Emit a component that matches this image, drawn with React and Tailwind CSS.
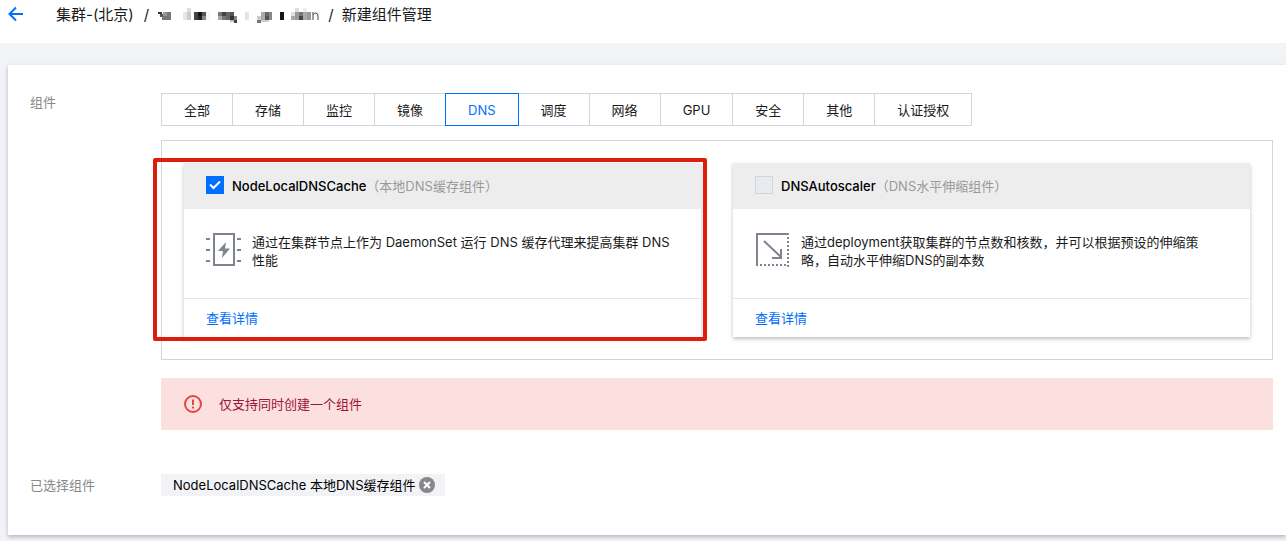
import { useState } from 'react'

const TABS = ['全部', '存储', '监控', '镜像', 'DNS', '调度', '网络', 'GPU', '安全', '其他', '认证授权']

const COMPONENTS = [
  {
    id: 'NodeLocalDNSCache',
    alias: '本地DNS缓存组件',
    desc: '通过在集群节点上作为 DaemonSet 运行 DNS 缓存代理来提高集群 DNS\n性能',
    Icon: CacheIcon,
    highlight: true,
  },
  {
    id: 'DNSAutoscaler',
    alias: 'DNS水平伸缩组件',
    desc: '通过deployment获取集群的节点数和核数，并可以根据预设的伸缩策\n略，自动水平伸缩DNS的副本数',
    Icon: ScaleIcon,
  },
]

// [x, y, width, height, grey] blocks that hide the cluster name
const MOSAIC = [
  [0, 5, 4, 2, '#333'], [2, 7, 3, 3, '#555'], [4, 9, 5, 4, '#777'], [5, 5, 4, 4, '#999'], [9, 5, 4, 8, '#777'],
  [25, 5, 4, 8, '#e6e6e6'], [29, 1, 4, 12, '#dedede'], [29, 5, 4, 8, '#ccc'], [36, 5, 4, 8, '#444'], [40, 5, 4, 4, '#111'], [40, 9, 4, 4, '#222'], [44, 5, 4, 4, '#555'], [44, 9, 4, 4, '#888'], [48, 5, 4, 8, '#f4f4f4'],
  [60, 5, 4, 4, '#777'], [60, 9, 4, 4, '#aaa'], [64, 5, 4, 4, '#444'], [64, 9, 4, 4, '#777'], [68, 5, 4, 8, '#666'], [72, 5, 4, 4, '#555'], [72, 9, 4, 4, '#333'], [72, 13, 4, 2, '#bbb'], [76, 9, 3, 4, '#888'], [76, 13, 3, 3, '#444'],
  [87, 5, 4, 8, '#e4e4e4'],
  [99, 9, 4, 4, '#ccc'], [99, 13, 4, 3, '#777'], [103, 5, 4, 8, '#aaa'], [107, 5, 4, 4, '#666'], [107, 9, 4, 4, '#555'], [111, 5, 3, 8, '#888'], [103, 13, 8, 2, '#ccc'],
  [122, 5, 4, 8, '#151515'],
  [133, 5, 4, 4, '#e0e0e0'], [133, 9, 4, 4, '#aaa'], [137, 1, 4, 4, '#ddd'], [137, 5, 4, 8, '#999'], [141, 5, 4, 4, '#777'], [141, 9, 4, 4, '#444'], [145, 1, 4, 4, '#eee'], [145, 5, 4, 8, '#aaa'], [149, 5, 4, 8, '#999'],
]

function Mosaic() {
  return (
    <svg className="h-4 w-[162px]" viewBox="0 0 162 16" shapeRendering="crispEdges" aria-hidden="true">
      {MOSAIC.map(([x, y, w, h, fill]) => <rect key={`${x}-${y}-${h}`} x={x} y={y} width={w} height={h} fill={fill} />)}
      <path d="M155 13V5M155 8q1-2 3-2 2 0 2 3v4" fill="none" stroke="#444" shapeRendering="auto" />
    </svg>
  )
}

function CacheIcon() {
  return (
    <svg className="w-9 h-[34px] shrink-0" viewBox="0 0 36 34" fill="none" stroke="#7e8591" strokeWidth="2" aria-hidden="true">
      <path d="M8 1h20v31H8z" />
      <path d="M0 6h4M0 17h4M0 28h4M31 6h4M31 17h4M31 28h4" />
      <path d="M20 9l-8 9h5l-1 7 8-9.500h-5z" fill="#7e8591" stroke="none" />
    </svg>
  )
}

function ScaleIcon() {
  return (
    <svg className="w-9 h-[34px] shrink-0" viewBox="0 0 36 34" fill="none" stroke="#7e8591" strokeWidth="2" aria-hidden="true">
      <path d="M2 33V1h32" />
      <path d="M33 4v30M5 32h27" strokeDasharray="2 2" />
      <path d="M9 8l17 16M26 16v9h-9" />
    </svg>
  )
}

function ComponentCard({ item, checked, onChange }) {
  const { id, alias, desc, Icon, highlight } = item
  return (
    <section className="relative bg-white shadow-[0_2px_4px_rgba(54,58,80,0.32)]">
      <label className="flex h-[46px] items-center bg-[#ededed] px-[22px] pb-[2px]">
        <span className="relative flex">
          <input
            type="checkbox" checked={checked} onChange={onChange}
            className="size-[18px] appearance-none border border-[#cfd5de] bg-[#e7eaef] checked:border-[#006eff] checked:bg-[#006eff]"
          />
          {checked && (
            <svg className="pointer-events-none absolute inset-0 size-[18px]" viewBox="0 0 18 18" fill="none" stroke="#fff" strokeWidth="2" aria-hidden="true">
              <path d="M4 8.500l3.500 3.500L14 5.500" />
            </svg>
          )}
        </span>
        <span className="ml-2 pt-[2px] font-medium text-black">{id}</span>
        <span className="pt-[2px] text-[#999]">（{alias}）</span>
      </label>
      <div className="flex h-[90px] gap-[10px] border-b border-[#e5e5e5] pt-6 pr-4 pl-[22px]">
        <Icon />
        <p className="leading-[18px] whitespace-pre-line">{desc}</p>
      </div>
      <div className="flex h-[38px] items-center px-[22px]">
        <a href="#detail" className="text-[#006eff]">查看详情</a>
      </div>
      {highlight && <div className="pointer-events-none absolute -top-[5px] -right-[6px] -bottom-1 -left-[31px] rounded-xs border-4 border-[#dc1e0c]" />}
    </section>
  )
}

export default function App() {
  const [tab, setTab] = useState('DNS')
  const [selected, setSelected] = useState('NodeLocalDNSCache')
  const current = COMPONENTS.find(c => c.id === selected)

  return (
    <div className="min-h-screen overflow-hidden bg-[#f2f3f7] pb-[6px] font-[Inter,'Noto_Sans_CJK_SC',sans-serif] text-[13px] leading-[18px] text-[#1a1a1a]">
      <header className="flex h-[43px] items-start bg-white px-2 pt-1 text-[15px] leading-[22px]">
        <button type="button" aria-label="返回" className="mt-[2px] flex">
          <svg className="size-4" viewBox="0 0 16 16" fill="none" stroke="#006eff" strokeWidth="2" aria-hidden="true">
            <path d="M15 8H2M8 1.500L1.500 8 8 14.500" />
          </svg>
        </button>
        <nav className="ml-8 flex items-center">
          <span>集群-(北京)</span>
          <span className="ml-[10px] mr-[9px]">/</span>
          <Mosaic />
          <span className="mx-2">/</span>
          <span>新建组件管理</span>
        </nav>
      </header>

      <main className="mt-[22px] ml-2 bg-white pt-7 pr-[13px] pb-[39px] pl-[22px] shadow-[0_2px_4px_rgba(54,58,80,0.32)]">
        <div className="flex">
          <div className="w-[131px] shrink-0 text-[#888]">组件</div>
          <div className="min-w-0 flex-1">
            <div className="flex">
              {TABS.map(t => (
                <button
                  key={t} type="button" onClick={() => setTab(t)}
                  className={`-mr-px h-[33px] border px-[22px] ${t === tab ? 'relative border-[#006eff] text-[#006eff]' : 'border-[#cfd5de]'}`}
                >
                  {t}
                </button>
              ))}
            </div>
            <div className="mt-[14px] grid grid-cols-2 gap-8 border border-[#cfd5de] px-[22px] py-[22px]">
              {COMPONENTS.map(c => (
                <ComponentCard key={c.id} item={c} checked={c.id === selected} onChange={() => setSelected(c.id === selected ? null : c.id)} />
              ))}
            </div>
            <div role="alert" className="mt-[18px] flex h-[52px] items-center gap-[17px] bg-[#fcdfdf] px-[23px] text-[#9b1439]">
              <svg className="size-[18px]" viewBox="0 0 18 18" fill="none" stroke="#e54545" strokeWidth="2" aria-hidden="true">
                <circle cx="9" cy="9" r="8" />
                <path d="M9 4.500v5.500M9 11.500v2" />
              </svg>
              仅支持同时创建一个组件
            </div>
          </div>
        </div>
        <div className="mt-11 flex min-h-[22px]">
          <div className="w-[131px] shrink-0 pt-[2px] text-[#888]">已选择组件</div>
          {current && (
            <div className="flex h-[22px] items-center gap-1 bg-[#f2f3f7] pr-[10px] pl-3 text-black">
              {current.id} {current.alias}
              <button type="button" aria-label="移除" onClick={() => setSelected(null)}>
                <svg className="size-4" viewBox="0 0 16 16" aria-hidden="true">
                  <circle cx="8" cy="8" r="8" fill="#888" />
                  <path d="M5 5l6 6M11 5l-6 6" stroke="#fff" strokeWidth="2" />
                </svg>
              </button>
            </div>
          )}
        </div>
      </main>
    </div>
  )
}
